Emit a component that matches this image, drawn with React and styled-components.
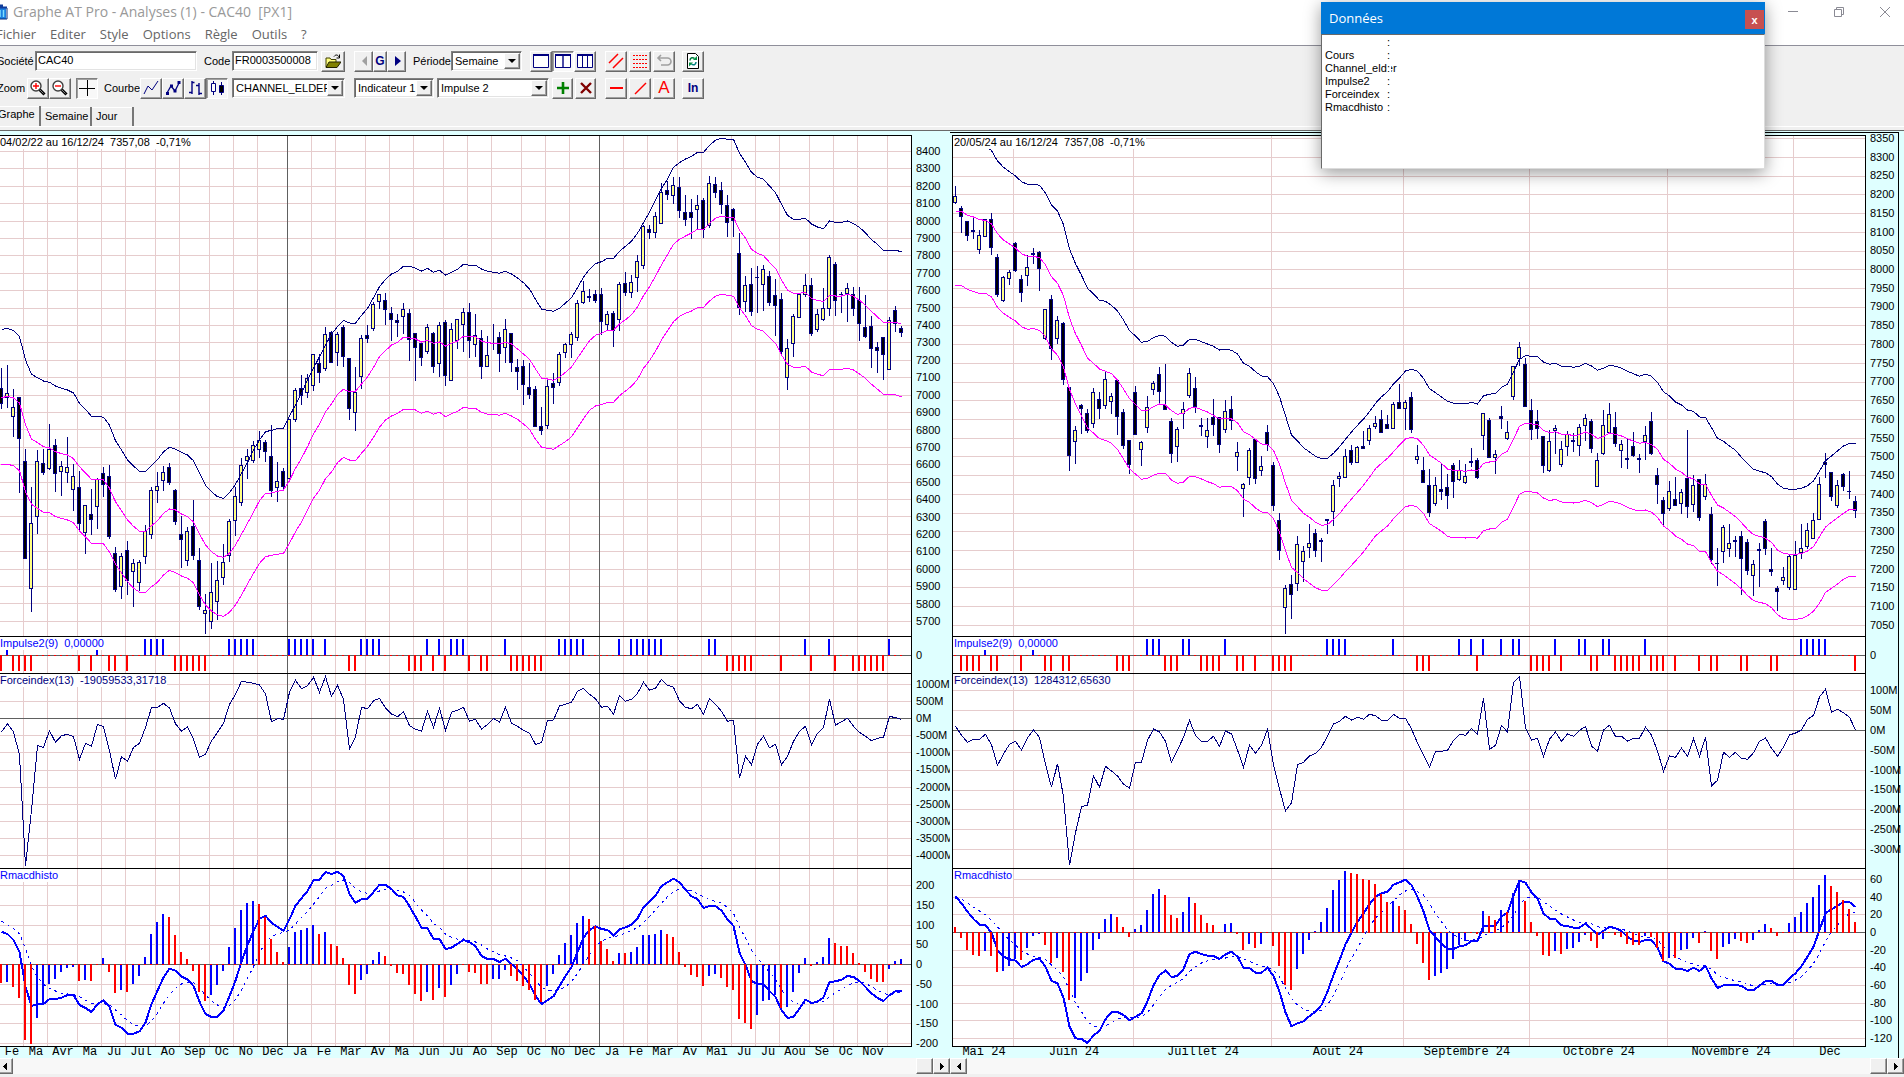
import React from "react";
import styled, { createGlobalStyle, css } from "styled-components";

const nums = (s) => s.trim().split(/\s+/).map(Number);

// Levels are recorded in thirds of a pixel, one per bar.
const WEEKLY = {
  title: "04/02/22 au 16/12/24  7357,08  -0,71%",
  force: "Forceindex(13)  -19059533,31718",
  months: [
    ["Fe", 4], ["Ma", 4], ["Avr", 5], ["Ma", 4], ["Ju", 4], ["Jul", 5], ["Ao", 4],
    ["Sep", 5], ["Oc", 4], ["No", 4], ["Dec", 5], ["Ja", 4], ["Fe", 4], ["Mar", 5],
    ["Av", 4], ["Ma", 4], ["Jun", 5], ["Ju", 4], ["Ao", 4], ["Sep", 5], ["Oc", 4],
    ["No", 4], ["Dec", 5], ["Ja", 4], ["Fe", 4], ["Mar", 5], ["Av", 4], ["Mai", 5],
    ["Ju", 4], ["Ju", 4], ["Aou", 5], ["Se", 4], ["Oc", 4], ["Nov", 5], ["", 4],
  ],
  years: [48, 100],
  scales: {
    price: { first: 15, step: 17.4, from: 8400, by: -100, count: 28 },
    force: { first: 10, step: 17.1, from: 1000, by: -500, count: 11, unit: "M" },
    macd: { first: 16, step: 19.75, from: 200, by: -50, count: 9 },
  },
  upper: nums(`598 596 601 620 690 733 743 753 757 768 775 780 789 820 838 859 859 862 886 932
    960 990 1008 1024 1024 1007 989 965 952 958 967 975 992 1030 1066 1085 1100 1105 1088 1063
    1030 998 959 930 905 901 896 895 858 825 790 750 715 680 645 612 590 571 579 580
    556 535 503 470 448 432 424 409 409 415 423 415 427 421 435 427 418 403 406 406
    417 424 427 430 424 432 444 458 477 508 537 541 544 535 519 503 473 442 418 401
    395 385 385 364 349 334 310 278 247 211 175 148 112 98 87 79 67 67 46 31
    25 28 28 70 97 127 142 148 168 188 223 256 268 268 265 282 291 296 273 277
    277 273 281 292 309 329 343 361 361 361 365`),
  middle: nums(`803 799 804 819 884 927 938 950 954 965 971 975 986 1010 1029 1048 1048 1050 1075 1115
    1142 1170 1189 1204 1204 1187 1172 1150 1137 1140 1152 1160 1176 1212 1245 1265 1278 1282 1270 1245
    1213 1180 1147 1112 1090 1089 1084 1080 1052 1015 985 950 912 882 845 822 793 778 785 784
    762 741 712 680 662 645 637 622 624 627 636 631 640 636 648 640 633 619 621 620
    633 638 640 642 637 642 657 672 688 717 744 747 751 742 727 711 684 658 632 616
    610 601 601 582 569 554 530 497 470 439 404 374 343 328 318 309 298 298 280 265
    259 262 262 300 325 358 370 377 397 415 450 480 490 490 487 505 512 514 496 498
    498 493 499 511 526 544 561 577 577 577 583`),
  lower: nums(`1005 1003 1007 1022 1085 1123 1135 1147 1148 1160 1165 1170 1178 1203 1221 1240 1240 1241 1267 1302
    1329 1355 1374 1387 1387 1370 1357 1335 1321 1328 1338 1345 1358 1395 1425 1443 1455 1459 1447 1425
    1395 1362 1330 1300 1280 1276 1273 1270 1240 1205 1176 1140 1105 1080 1046 1026 998 982 990 992
    970 949 922 892 870 858 850 838 838 840 850 844 853 847 860 851 844 832 835 835
    847 853 853 856 850 858 868 882 898 928 951 955 958 946 935 920 893 866 841 828
    823 818 817 797 783 769 748 715 692 664 630 602 575 559 550 543 533 532 513 499
    493 496 499 533 557 587 598 604 623 640 675 703 712 712 709 726 733 737 718 718
    718 715 720 732 745 763 778 793 793 794 800`),
  // high, body top, body bottom, low, 1 when the close is up
  candles: `715 775 821 838 0|705 790 803 833 1|778 831 862 922 1|800 802 926 1090 0|957 993 1286 1286 0
    |1072 1180 1376 1445 1|960 994 1160 1212 1|957 999 1028 1036 0|882 958 1016 1020 1|927 945 1031 1085 0
    |994 1009 1025 1097 1|921 1011 1030 1058 1|1003 1039 1081 1142 1|1023 1072 1181 1203 0|1125 1126 1208 1272 1
    |1078 1152 1169 1215 0|1045 1048 1132 1196 1|1011 1030 1064 1100 0|1005 1038 1220 1226 0|1251 1269 1379 1386 0
    |1270 1279 1370 1407 1|1233 1260 1352 1394 0|1288 1300 1325 1430 1|1290 1297 1358 1383 1|1185 1204 1280 1301 1
    |1070 1081 1214 1226 1|1026 1069 1084 1118 1|1009 1027 1052 1082 1|1000 1011 1058 1064 0|1077 1080 1175 1185 0
    |1158 1213 1229 1313 0|1190 1204 1292 1307 1|1110 1188 1277 1289 0|1255 1290 1430 1440 0|1393 1441 1451 1511 1
    |1298 1387 1475 1497 1|1293 1351 1417 1471 1|1242 1297 1343 1364 1|1168 1174 1277 1296 1|1070 1099 1172 1218 1
    |984 1006 1118 1128 1|957 979 992 1047 1|933 946 992 998 1|904 929 961 984 1|930 937 965 996 0
    |885 979 1082 1100 0|995 1053 1073 1116 1|1014 1023 1070 1077 0|866 868 1046 1048 1|774 781 869 876 1
    |735 775 798 825 0|732 744 789 804 1|673 673 767 782 1|673 699 728 758 0|591 613 718 722 1
    |603 607 698 699 0|606 612 668 708 1|585 592 681 710 0|684 685 836 870 0|711 787 848 903 1
    |616 625 742 776 1|585 615 627 638 0|517 523 596 603 1|492 493 515 537 1|489 511 539 585 0
    |532 549 570 632 0|553 570 579 620 0|519 538 562 612 1|538 549 629 692 0|610 610 654 753 0
    |638 640 683 708 0|583 592 665 671 1|607 610 711 729 0|577 586 703 741 1|571 577 738 768 0
    |580 598 752 752 1|567 568 632 657 1|534 547 584 665 1|519 547 632 684 0|552 616 644 681 1
    |600 625 711 747 0|617 676 710 711 1|582 638 640 660 0|606 621 671 726 0|567 598 653 699 1
    |609 610 698 726 0|687 711 725 780 0|690 708 764 825 0|699 771 795 807 0|768 777 890 890 0
    |831 888 902 914 0|744 769 887 897 1|729 759 773 822 0|666 673 758 768 1|640 643 668 684 1
    |606 613 644 684 1|510 520 623 633 1|453 484 518 522 1|477 498 503 516 0|480 492 513 519 0
    |474 492 575 615 0|543 553 584 602 1|543 549 602 651 0|456 463 569 603 1|426 459 488 497 0
    |435 457 488 504 1|375 394 443 486 1|285 289 407 417 1|285 297 309 327 0|246 259 308 324 1
    |159 187 281 282 1|153 180 195 210 0|141 166 197 222 1|141 171 242 264 0|195 246 270 288 0
    |207 246 263 327 0|195 226 239 300 1|204 210 299 324 0|138 160 287 294 1|141 162 188 204 0
    |156 180 224 252 0|195 225 278 321 0|234 237 272 321 0|309 369 534 555 0|438 466 515 546 1
    |414 462 545 558 0|408 441 443 549 0|405 418 464 543 1|423 438 518 528 0|447 495 528 618 0
    |489 507 665 678 0|627 655 743 780 1|552 559 641 681 1|490 493 563 564 1|432 466 494 501 1
    |444 465 611 618 0|537 553 599 606 1|474 535 569 573 1|375 382 536 558 1|396 402 512 558 0
    |486 493 496 549 0|459 475 491 576 1|471 493 537 558 0|471 509 581 633 0|495 591 621 624 0
    |558 588 656 714 0|636 651 662 729 0|621 622 674 750 0|561 571 719 719 1|528 540 581 606 0
    |588 594 609 621 0`.split("|").map(nums),
  up: nums(`1 16 24 25 26 27 38 39 40 41 42 48 49 50 51 52 54 60 61 62 63 71 73 75 76 77 84
    93 94 95 96 97 103 105 106 107 108 109 110 118 119 134 138 148`),
  down: nums(`0 2 3 4 5 13 15 18 19 21 29 30 31 32 33 34 58 59 68 69 70 72 74 78 80 81
    85 86 87 88 89 90 121 122 123 124 125 130 135 139 142 143 144 145 146 147`),
  forceLine: nums(`305 281 306 375 707 540 347 352 302 337 317 313 320 388 340 349 283 290 362 448
    380 394 352 340 292 233 232 220 234 281 304 290 327 382 372 333 307 280 223 193
    154 157 160 165 192 275 266 268 187 151 176 167 142 187 140 199 166 208 358 320
    232 236 212 205 234 252 260 245 287 298 304 244 292 235 301 247 241 232 274 268
    297 284 265 276 232 280 289 301 310 343 338 271 270 228 223 217 184 175 193 206
    232 229 253 196 214 208 190 157 181 175 148 166 172 213 232 236 223 253 205 223
    244 274 271 445 379 404 343 319 353 343 404 379 334 304 289 344 310 292 208 286
    275 265 289 307 319 332 325 322 259 263 268`),
  histo: nums(`1058 1057 1071 1103 1229 1241 1163 1120 1061 1046 1025 1013 1010 1053 1049 1052 1006 984 1025 1088
    1080 1085 1061 1037 981 912 876 852 861 915 966 987 1022 1086 1112 1094 1064 1022 951 894
    840 819 813 822 861 927 966 996 951 906 900 894 885 912 906 942 948 984 1064 1091
    1049 1031 990 966 978 1007 1028 1031 1064 1091 1112 1085 1109 1073 1100 1064 1031 1006 1025 1028
    1062 1062 1047 1046 1020 1038 1053 1068 1080 1109 1115 1067 1032 975 939 915 879 858 867 888
    933 957 993 969 969 966 951 915 914 912 900 912 921 966 1010 1034 1041 1067 1037 1031
    1044 1070 1079 1166 1178 1196 1154 1112 1110 1094 1134 1130 1085 1028 984 1007 996 981 924 939
    948 948 969 1000 1025 1046 1055 1056 1016 993 987`),
  macd: nums(`905 912 930 965 1070 1128 1122 1122 1107 1107 1103 1095 1095 1125 1134 1146 1122 1111 1130 1184
    1193 1211 1211 1204 1178 1122 1082 1042 1016 1022 1040 1048 1068 1115 1152 1161 1160 1142 1098 1052
    995 945 903 866 857 879 890 902 868 827 805 783 751 749 726 732 725 738 792 818
    808 806 786 764 765 777 796 801 829 860 893 895 926 927 957 953 941 930 937 949
    978 987 987 996 986 1002 1018 1038 1063 1097 1122 1111 1099 1068 1038 1011 967 923 900 889
    897 900 916 898 892 884 865 832 815 797 768 757 746 757 779 799 807 834 828 828
    842 868 888 968 1004 1053 1062 1062 1083 1101 1140 1164 1160 1136 1109 1119 1115 1102 1056 1054
    1049 1038 1041 1053 1071 1090 1104 1113 1095 1084 1084`),
  signal: nums(`874 884 895 912 955 1008 1042 1063 1075 1083 1090 1092 1093 1100 1110 1120 1122 1121 1124 1140
    1155 1172 1183 1190 1188 1172 1150 1120 1094 1075 1062 1058 1058 1075 1095 1112 1125 1133 1126 1108
    1080 1045 1010 970 935 920 912 907 900 882 862 845 822 800 775 766 755 750 758 775
    785 790 789 783 779 778 781 786 796 818 840 858 880 893 912 922 928 927 932 936
    945 957 966 974 978 984 993 1010 1030 1052 1072 1081 1083 1079 1070 1055 1030 1002 975 950
    933 925 922 915 910 901 893 878 860 840 820 800 785 776 777 783 791 801 809 814
    820 832 850 890 925 960 985 1005 1027 1048 1080 1103 1116 1124 1118 1117 1117 1115 1100 1088
    1077 1066 1060 1056 1060 1070 1081 1090 1095 1090 1087`),
  zero: { force: 88, macd: 334 },
};

const DAILY = {
  title: "20/05/24 au 16/12/24  7357,08  -0,71%",
  force: "Forceindex(13)  1284312,65630",
  months: [
    ["Mai 24", 10], ["Juin 24", 20], ["Juillet 24", 23], ["Aout 24", 22],
    ["Septembre 24", 21], ["Octobre 24", 23], ["Novembre 24", 21], ["Dec", 12],
  ],
  years: [],
  scales: {
    price: { first: 2.2, step: 18.72, from: 8350, by: -50, count: 27 },
    force: { first: 16, step: 19.9, from: 100, by: -50, count: 9, unit: "M" },
    macd: { first: 10, step: 17.67, from: 60, by: -20, count: 10 },
  },
  upper: nums(`20 22 28 32 38 45 62 93 112 125 138 155 163 163 166 190 225 243 284 357
    401 436 475 492 511 514 526 543 570 602 618 637 634 623 616 619 637 649 645 628
    628 635 642 649 660 658 661 672 700 709 725 738 740 761 800 857 915 933 953 966
    979 986 985 970 950 928 906 886 867 845 820 800 785 762 744 723 718 724 745 776
    788 801 814 820 820 822 817 822 797 793 790 772 762 725 688 677 679 680 696 703
    700 709 709 712 709 700 708 721 715 706 709 715 724 731 739 733 739 757 785 798
    816 825 840 844 861 862 893 925 934 948 961 982 1000 1018 1024 1028 1040 1062 1075 1078
    1078 1075 1067 1053 1023 992 978 963 948 940 940`),
  middle: nums(`244 244 256 261 269 271 282 311 330 342 354 371 379 379 383 404 440 460 497 564
    611 646 685 700 717 724 731 750 777 806 823 841 841 830 822 825 842 853 850 835
    832 839 846 856 867 866 867 878 905 914 928 942 944 961 1003 1060 1111 1130 1150 1162
    1177 1186 1184 1168 1151 1128 1107 1087 1066 1042 1016 1000 985 965 945 927 922 927 946 975
    987 1000 1017 1021 1022 1024 1020 1023 1000 996 993 973 964 927 889 880 882 884 901 908
    905 913 913 917 914 906 913 925 920 909 913 918 926 934 940 937 944 958 988 1000
    1017 1027 1042 1046 1062 1063 1096 1125 1134 1147 1160 1178 1198 1214 1219 1225 1237 1260 1270 1273
    1273 1271 1263 1250 1220 1191 1177 1163 1150 1138 1138`),
  lower: nums(`466 467 478 485 490 490 501 532 550 562 573 590 598 596 601 620 656 676 712 778
    822 858 894 909 926 931 940 958 987 1017 1032 1048 1045 1036 1030 1030 1050 1060 1056 1039
    1040 1047 1055 1061 1072 1069 1070 1082 1107 1117 1134 1146 1148 1166 1207 1262 1312 1328 1346 1360
    1373 1381 1381 1364 1346 1324 1306 1286 1266 1242 1218 1203 1188 1166 1147 1130 1126 1132 1150 1181
    1192 1204 1219 1224 1222 1224 1222 1225 1202 1197 1195 1177 1167 1131 1093 1084 1086 1089 1104 1112
    1108 1116 1117 1119 1117 1111 1118 1130 1123 1114 1117 1123 1132 1139 1143 1140 1147 1162 1188 1201
    1218 1228 1242 1247 1264 1265 1297 1324 1334 1348 1361 1377 1396 1412 1417 1421 1433 1454 1466 1468
    1468 1466 1457 1444 1420 1387 1375 1362 1348 1339 1339`),
  candles: `168 199 218 222 1|229 235 260 309 0|273 274 318 332 0|262 301 305 326 0|301 314 359 371 1
    |267 268 320 322 1|249 268 353 374 0|372 381 494 501 0|438 442 514 515 1|420 427 448 464 1
    |337 339 422 425 0|435 447 488 515 0|375 411 439 468 1|354 370 374 402 0|363 366 416 483 0
    |537 538 628 630 1|495 507 656 690 0|558 571 628 642 1|576 579 749 764 0|770 771 977 1022 0
    |888 901 937 1001 1|823 825 837 911 0|838 849 902 908 0|774 787 883 893 1|786 807 837 866 0
    |726 748 829 836 1|789 799 815 851 1|747 750 860 915 0|837 846 947 956 0|930 930 1004 1031 0
    |768 786 914 914 0|933 937 961 1007 1|798 832 893 908 1|753 760 781 794 1|711 732 785 822 0
    |702 826 839 839 0|864 874 971 998 0|891 898 952 995 1|816 838 853 896 1|714 730 797 803 1
    |741 774 832 848 0|864 886 892 917 0|864 901 920 953 1|807 861 884 917 0|861 861 944 968 0
    |810 844 899 908 1|798 837 872 900 0|936 967 980 1022 1|1059 1063 1076 1160 1|954 961 1045 1064 1
    |927 928 1046 1062 0|978 1009 1024 1037 1|885 906 946 962 0|996 1005 1127 1142 0|1149 1170 1262 1289 0
    |1366 1375 1433 1511 1|1336 1362 1396 1467 0|1218 1243 1361 1383 1|1248 1264 1295 1355 1|1182 1240 1253 1284 1
    |1198 1210 1262 1280 0|1224 1231 1235 1296 0|1167 1168 1172 1212 0|1050 1066 1145 1187 1|1026 1039 1046 1070 1
    |957 979 1043 1043 1|945 961 998 1004 0|947 952 998 998 1|903 949 956 957 0|885 895 932 944 1
    |858 880 892 896 1|840 867 908 908 0|855 882 896 897 0|816 823 896 896 1|762 816 836 837 0
    |811 817 836 899 1|786 801 899 908 0|945 979 991 1001 1|981 1020 1058 1058 0|1017 1065 1148 1160 0
    |1041 1066 1121 1128 1|1002 1077 1085 1109 0|1032 1071 1097 1137 0|999 1005 1055 1104 0|990 1021 1049 1053 1
    |1002 1039 1058 1062 1|954 993 998 1010 0|984 990 1043 1047 0|849 850 917 960 1|864 870 983 984 0
    |960 972 983 1032 1|828 858 866 896 0|873 907 926 930 1|708 709 800 809 1|636 652 686 708 1
    |684 702 830 831 0|807 840 899 930 0|840 873 896 926 0|918 919 1007 1028 0|900 934 1022 1026 1
    |885 895 902 971 1|933 958 1004 1010 1|903 913 952 978 1|909 930 935 965 0|882 891 947 977 1
    |852 865 887 933 1|867 873 956 968 0|969 991 1070 1071 1|840 886 971 975 1|819 853 908 908 1
    |846 891 941 950 0|930 943 962 1014 1|927 984 989 1017 0|906 948 977 980 0|972 984 991 1028 1
    |888 916 935 990 1|846 873 971 975 0|1014 1035 1064 1122 0|1101 1110 1151 1187 0|1053 1084 1136 1142 1
    |1041 1107 1127 1127 0|1077 1087 1121 1151 1|900 1044 1131 1164 0|1035 1066 1124 1145 1|1047 1047 1164 1172 0
    |1032 1063 1100 1109 1|1131 1152 1289 1301 0|1254 1299 1301 1368 0|1185 1192 1265 1298 1|1182 1240 1256 1280 1
    |1218 1230 1235 1280 0|1203 1218 1286 1395 0|1227 1236 1323 1334 0|1290 1303 1337 1398 1|1239 1257 1262 1371 0
    |1167 1173 1256 1275 0|1254 1317 1326 1337 0|1368 1374 1386 1443 0|1311 1342 1352 1364 1|1275 1279 1373 1380 1
    |1233 1276 1379 1380 1|1182 1255 1268 1286 1|1179 1201 1250 1256 1|1149 1171 1226 1226 1|1041 1063 1169 1169 1
    |969 997 1004 1044 0|1026 1027 1101 1113 0|1050 1066 1127 1133 1|1029 1032 1070 1083 0|1023 1083 1085 1107 0
    |1098 1113 1142 1164 0`.split("|").map(nums),
  up: nums(`5 13 32 33 34 38 39 45 62 63 64 65 73 84 86 88 91 93 94 100 104 105 108 109 115
    141 142 143 144 145`),
  down: nums(`1 2 3 4 6 7 11 15 16 18 19 27 28 29 35 36 37 41 42 43 44 47 48 50 53 54 55 56
    77 78 79 87 96 97 98 99 101 106 107 110 111 112 113 114 116 117 118 120 124 126 127
    131 132 136 137 150`),
  forceLine: nums(`289 316 337 328 328 313 344 406 372 343 334 360 324 300 322 403 472 401 500 706
    608 530 525 437 472 409 423 438 462 475 397 397 331 297 306 334 397 360 322 271
    316 334 334 319 349 303 312 360 412 345 370 346 298 405 477 543 519 404 397 378
    370 352 318 282 274 259 270 262 268 253 257 271 271 253 265 265 297 339 375 412
    364 364 361 331 313 316 295 313 205 358 346 286 306 157 139 295 331 325 379 328
    306 334 312 319 301 290 348 364 300 286 319 319 333 325 325 291 316 363 424 378
    382 354 379 327 379 322 468 451 367 382 367 385 388 368 334 324 355 379 351 315
    309 300 268 256 201 178 246 238 248 262 300`),
  histo: nums(`891 923 960 975 977 963 977 1025 1024 1007 987 990 953 917 911 944 998 983 1025 1109
    1103 1052 1028 960 926 867 852 861 891 922 897 885 840 792 777 795 855 864 846 801
    819 855 879 885 909 882 879 911 960 941 953 941 907 947 1007 1064 1079 1016 971 929
    903 876 834 780 750 723 729 732 747 750 762 792 816 813 828 840 882 941 998 1049
    1037 1028 1016 986 945 932 909 911 843 858 870 840 846 789 753 813 876 917 974 977
    962 971 956 953 935 914 932 953 926 909 914 922 941 944 944 917 920 953 992 983
    984 959 956 923 938 903 962 986 950 941 926 932 938 929 900 882 894 917 910 879
    861 846 819 801 765 735 768 786 810 837 876`),
  macd: nums(`799 820 845 867 884 886 908 960 980 988 992 1011 1003 989 986 1010 1053 1060 1103 1190
    1225 1227 1239 1216 1203 1168 1146 1146 1155 1171 1160 1150 1114 1066 1035 1022 1041 1038 1018 972
    965 972 977 978 987 973 965 980 1013 1014 1028 1028 1013 1038 1085 1147 1189 1180 1174 1158
    1145 1125 1085 1035 990 943 908 875 850 823 800 790 785 764 757 749 765 801 844 900
    922 940 957 957 949 946 933 933 888 887 887 859 849 797 752 758 787 805 850 866
    867 886 888 893 893 880 897 914 903 890 895 903 921 931 936 930 930 953 994 1001
    1016 1017 1023 1013 1023 1008 1045 1074 1066 1064 1064 1068 1079 1080 1067 1053 1053 1065 1065 1045
    1030 1008 980 950 900 850 838 827 816 816 831`),
  signal: nums(`805 808 818 832 843 855 870 890 913 930 945 962 972 979 983 988 1005 1020 1040 1080
    1118 1145 1175 1188 1192 1188 1178 1168 1162 1163 1163 1160 1147 1125 1100 1078 1066 1057 1045 1025
    1010 999 992 988 987 984 979 980 988 994 1002 1008 1012 1022 1040 1075 1105 1125 1138 1143
    1145 1140 1125 1095 1060 1020 985 955 920 888 865 845 830 812 795 783 778 785 795 820
    850 875 900 915 922 930 930 929 917 910 903 892 880 855 825 805 802 801 815 828
    840 852 861 870 877 878 881 890 893 892 893 897 903 910 919 921 922 930 950 966
    980 989 998 1001 1007 1007 1018 1035 1042 1048 1052 1055 1062 1068 1068 1063 1061 1062 1062 1058
    1050 1040 1022 1000 970 935 905 885 865 850 847`),
  zero: { force: 100, macd: 302 },
};

const WIDTH = 912;
const BAR = 6;
const GRID = "#e6cccd";
const DARK = "#606060";
const NAVY = "#000080";
const BLUE = "#0000ff";
const RED = "#ff0000";
const PINK = "#ff00ff";

// pane height, and how far the recorded levels sit above the pane
const PANES = {
  price: { height: 500, shift: 6 },
  impulse: { height: 36, shift: 7 },
  force: { height: 194, shift: 44 },
  macd: { height: 177, shift: 239 },
};

const starts = (months) => {
  let n = 0;
  return months.slice(0, -1).map(([, w]) => (n += w));
};

const points = (levels, shift) =>
  levels.map((v, i) => `${i * BAR + 2.5},${(v / 3 - shift).toFixed(1)}`).join(" ");

const Grid = ({ data, pane }) => {
  const scale = data.scales[pane];
  const h = PANES[pane].height;
  return (
    <g>
      {scale &&
        Array.from({ length: scale.count }, (_, k) => (
          <rect key={k} x={0} y={Math.round(scale.first + scale.step * k)} width={WIDTH} height={1} fill={GRID} />
        ))}
      {starts(data.months).map((n) => (
        <rect key={n} x={n * BAR} y={0} width={1} height={h} fill={data.years.includes(n) ? DARK : GRID} />
      ))}
    </g>
  );
};

const Drawing = ({ pane, children }) => (
  <Plot viewBox={`0 0 ${WIDTH} ${PANES[pane].height}`} preserveAspectRatio="none" shapeRendering="crispEdges" aria-hidden="true">
    {children}
  </Plot>
);

const Line = ({ levels, pane, color, width = 1, dash }) => (
  <polyline
    points={points(levels, PANES[pane].shift)}
    fill="none"
    stroke={color}
    strokeWidth={width}
    strokeDasharray={dash}
  />
);

const Candle = ({ i, bar }) => {
  const [high, top, bottom, low] = bar.map((v) => Math.round(v / 3) - PANES.price.shift);
  const up = bar[4] === 1;
  const x = i * BAR;
  const h = Math.max(1, bottom - top);
  return (
    <g>
      <rect x={x + 2} y={high} width={1} height={low - high} fill={NAVY} />
      <rect x={x} y={top} width={4} height={h} fill={NAVY} />
      {h > 2 && <rect x={x + 1} y={top + 1} width={2} height={h - 2} fill={up ? "#ffff80" : "#000"} />}
    </g>
  );
};

const PriceDrawing = ({ data }) => (
  <Drawing pane="price">
    <Grid data={data} pane="price" />
    {data.candles.map((bar, i) => (
      <Candle key={i} i={i} bar={bar} />
    ))}
    <Line levels={data.upper} pane="price" color={NAVY} />
    <Line levels={data.middle} pane="price" color={PINK} />
    <Line levels={data.lower} pane="price" color={PINK} />
  </Drawing>
);

const ImpulseDrawing = ({ data }) => (
  <Drawing pane="impulse">
    <Grid data={data} pane="impulse" />
    <rect x={0} y={18} width={WIDTH} height={1} fill={DARK} />
    {data.candles.map((_, i) => (
      <rect key={i} x={i * BAR + 1} y={18} width={2} height={1} fill={RED} />
    ))}
    {data.up.map((i) => (
      <rect key={i} x={i * BAR + 1} y={2} width={2} height={16} fill={BLUE} />
    ))}
    {data.down.map((i) => (
      <rect key={i} x={i * BAR + 1} y={19} width={2} height={15} fill={RED} />
    ))}
  </Drawing>
);

const ForceDrawing = ({ data }) => (
  <Drawing pane="force">
    <Grid data={data} pane="force" />
    <rect x={0} y={data.zero.force - PANES.force.shift} width={WIDTH} height={1} fill={DARK} />
    <Line levels={data.forceLine} pane="force" color={NAVY} />
  </Drawing>
);

const MacdDrawing = ({ data }) => {
  const zero = data.zero.macd - PANES.macd.shift;
  return (
    <Drawing pane="macd">
      <Grid data={data} pane="macd" />
      <rect x={0} y={zero} width={WIDTH} height={1} fill={DARK} />
      <Line levels={data.macd} pane="macd" color={BLUE} width={2} />
      <Line levels={data.signal} pane="macd" color={BLUE} dash="3 4 2 4" />
      {data.histo.map((v, i) => {
        const y = Math.round(v / 3) - PANES.macd.shift;
        const rising = i > 0 && v < data.histo[i - 1];
        return (
          <g key={i}>
            <rect x={i * BAR + 1} y={Math.min(y, zero)} width={2} height={Math.abs(zero - y)} fill={rising ? BLUE : RED} />
            <rect x={i * BAR + 1} y={zero} width={2} height={1} fill={RED} />
          </g>
        );
      })}
    </Drawing>
  );
};

const Scale = ({ scale, height }) => {
  const last = scale.first + scale.step * (scale.count - 1);
  return (
    <Axis $top={Math.round(scale.first - 5)} $bottom={Math.round(height - 7 - last)}>
      {Array.from({ length: scale.count }, (_, k) => (
        <span key={k}>
          {scale.from + scale.by * k}
          {scale.unit}
        </span>
      ))}
    </Axis>
  );
};

const ChartPanel = ({ data, active, name }) => (
  <Panel aria-label={name}>
    <Frame $active={active}>
      <Row $grow={501}>
        <Cell>
          <PriceDrawing data={data} />
          <Legend>{data.title}</Legend>
        </Cell>
        <Scale scale={data.scales.price} height={501} />
      </Row>
      <Row $grow={37}>
        <Cell>
          <ImpulseDrawing data={data} />
          <Legend $color={BLUE}>{"Impulse2(9)  0,00000"}</Legend>
        </Cell>
        <Scale scale={{ first: 18, step: 0, from: 0, by: 0, count: 1 }} height={37} />
      </Row>
      <Row $grow={195}>
        <Cell>
          <ForceDrawing data={data} />
          <Legend $color={NAVY}>{data.force}</Legend>
        </Cell>
        <Scale scale={data.scales.force} height={195} />
      </Row>
      <Row $grow={179}>
        <Cell $last>
          <MacdDrawing data={data} />
          <Legend $color={BLUE}>Rmacdhisto</Legend>
        </Cell>
        <Scale scale={data.scales.macd} height={179} />
      </Row>
      <Months>
        {data.months.map(([label, span], i) => (
          <Month key={i} $span={span}>
            {label}
          </Month>
        ))}
      </Months>
    </Frame>
    <ScrollBar>
      <ScrollButton aria-label="Reculer">
        <svg width="4" height="7" viewBox="0 0 4 7" shapeRendering="crispEdges">
          <path d="M4 0v7L0 3.5z" />
        </svg>
      </ScrollButton>
      <Track>
        <Thumb />
      </Track>
      <ScrollButton aria-label="Avancer">
        <svg width="4" height="7" viewBox="0 0 4 7" shapeRendering="crispEdges">
          <path d="M0 0v7L4 3.5z" />
        </svg>
      </ScrollButton>
    </ScrollBar>
  </Panel>
);

const Icon = ({ children, size = 16 }) => (
  <svg width={size} height={size} viewBox={`0 0 ${size} ${size}`} fill="none" aria-hidden="true">
    {children}
  </svg>
);

const Magnifier = ({ plus }) => (
  <Icon>
    <path d="M9.5 9.5l5 5" stroke="#000" strokeWidth="3" />
    <path d="M9.5 9.5l4 4" stroke="#808080" />
    <circle cx="6" cy="6" r="5" fill="#fff" stroke="#404040" strokeWidth="1.4" />
    <path d={plus ? "M3 6h6M6 3v6" : "M3 6h6"} stroke="red" strokeWidth="1.4" />
  </Icon>
);

const Sheet = ({ columns }) => (
  <Icon>
    <path d="M.5 1.5h15v13H.5z" fill="#fff" stroke={NAVY} />
    <path d="M0 2h16" stroke={NAVY} strokeWidth="2" />
    {columns === 2 && <path d="M8 2v12" stroke={NAVY} strokeWidth="1.4" />}
    {columns === 3 && <path d="M5.5 2v12M10.5 2v12" stroke={NAVY} />}
  </Icon>
);

const Dropdown = ({ label, value, width }) => (
  <Combo $w={width}>
    <select aria-label={label} defaultValue={value}>
      <option>{value}</option>
    </select>
    <Arrow>
      <svg width="8" height="4" viewBox="0 0 8 4" aria-hidden="true">
        <path d="M0 0h8L4 4z" />
      </svg>
    </Arrow>
  </Combo>
);

const MENUS = ["Fichier", "Editer", "Style", "Options", "Règle", "Outils", "?"];
const FIELDS = ["", "Cours", "Channel_elder", "Impulse2", "Forceindex", "Rmacdhisto"];

const App = () => (
  <>
    <GlobalStyle />
    <Window>
      <TitleBar>
        <Icon>
          <path d="M2 4h12v11H2z" fill="#1a7fe0" />
          <path d="M1 3.5h14M5 1.5h6" stroke="#103c9c" strokeWidth="2" />
          <path d="M4.5 6v7M8 6v7M11.5 6v7" stroke="#7fe0ff" strokeWidth="1.5" />
          <path d="M2 15h13V4" stroke="#082a78" />
        </Icon>
        <Caption>{"Graphe AT Pro - Analyses (1) - CAC40  [PX1]"}</Caption>
        <WindowButton aria-label="Réduire">
          <Icon size={12}><path d="M1 5.5h10" stroke="#8a8a94" /></Icon>
        </WindowButton>
        <WindowButton aria-label="Restaurer">
          <Icon size={12}>
            <path d="M1.5 3.5h7v7h-7zM3.5 3V1.5h7v7H9" stroke="#8a8a94" />
          </Icon>
        </WindowButton>
        <WindowButton aria-label="Fermer">
          <Icon size={12}><path d="M1 1l10 10M11 1L1 11" stroke="#8a8a94" /></Icon>
        </WindowButton>
      </TitleBar>
      <MenuBar>
        {MENUS.map((m) => (
          <MenuItem key={m}>{m}</MenuItem>
        ))}
      </MenuBar>

      <Toolbar>
        <ToolRow>
          <Label htmlFor="societe" $w={38}>Société</Label>
          <Field id="societe" defaultValue="CAC40" $w={162} />
          <Group $gap={7}>
            <Label htmlFor="code" $w={28}>Code</Label>
            <Field id="code" defaultValue="FR0003500008" $w={86} />
          </Group>
          <Group $gap={3}>
            <Tool $w={24} aria-label="Ouvrir">
              <Icon>
                <path d="M1 14V5h4l1 1.5h5V9" fill="#ffff80" stroke="#404000" />
                <path d="M1 14.5L4 9h12l-4 5.5z" fill="#808000" stroke="#202000" />
                <path d="M9 3.5c2-2.5 4-1.5 5 .5M14.5 1.5V5H11.5" stroke="#000" />
              </Icon>
            </Tool>
          </Group>
          <Group $gap={9}>
            <Tool $w={19} aria-label="Précédent">
              <Icon size={12}><path d="M9 1v10L4 6z" fill="#a0a0a0" /></Icon>
            </Tool>
            <Tool $w={14} $ink={NAVY}>G</Tool>
            <Tool $w={19} aria-label="Suivant">
              <Icon size={12}><path d="M4 1v10l6-5z" fill={NAVY} /></Icon>
            </Tool>
          </Group>
          <Group $gap={7}>
            <Label as="span" $w={38}>Période</Label>
            <Dropdown label="Période" value="Semaine" width={71} />
          </Group>
          <Group $gap={8}>
            <Tool aria-label="Un graphe"><Sheet columns={1} /></Tool>
            <Tool aria-label="Deux graphes" $pressed><Sheet columns={2} /></Tool>
            <Tool aria-label="Trois graphes"><Sheet columns={3} /></Tool>
          </Group>
          <Group $gap={9} $inner={2}>
            <Tool aria-label="Parallèles">
              <Icon><path d="M1 10L10 1M5 15L15 5" stroke="red" strokeWidth="1.5" /></Icon>
            </Tool>
            <Tool aria-label="Retracements">
              <Icon>
                <path d="M1 2.5h14M1 6.5h14M1 10.5h14M1 14.5h14" stroke="red" strokeDasharray="2 1" />
              </Icon>
            </Tool>
            <Tool aria-label="Annuler">
              <Icon><path d="M5 2L2 5l3 3M2 5h9.5a3.5 3.5 0 0 1 0 7H5" stroke="#a0a0a0" strokeWidth="1.6" /></Icon>
            </Tool>
          </Group>
          <Group $gap={7}>
            <Tool aria-label="Actualiser">
              <Icon>
                <path d="M2.5.5h8l3 3v12h-11z" fill="#fff" stroke="#000" />
                <path d="M5 7.5c0-3 3-3.5 4.500-2" stroke="#008040" strokeWidth="1.5" />
                <path d="M11 9c0 3-3 3.500-4.500 2" stroke="#008080" strokeWidth="1.5" />
                <path d="M8 7h4V3zM8 9.500H4v4z" fill="#009040" />
              </Icon>
            </Tool>
          </Group>
        </ToolRow>

        <ToolRow>
          <Label as="span" $w={30}>Zoom</Label>
          <Tool aria-label="Agrandir"><Magnifier plus /></Tool>
          <Tool aria-label="Diminuer"><Magnifier /></Tool>
          <Group $gap={5}>
            <Tool aria-label="Réticule" $pressed>
              <Icon><path d="M0 8.5h16M8.5 0v16" stroke="#000" /></Icon>
            </Tool>
          </Group>
          <Group $gap={6}>
            <Label as="span" $w={36}>Courbe</Label>
            <Tool aria-label="Ligne">
              <Icon><path d="M1 14l4-8 4 4 6-9" stroke={NAVY} /></Icon>
            </Tool>
            <Tool aria-label="Points">
              <Icon>
                <path d="M2 13l4-7 4 5 4-8" stroke={NAVY} strokeWidth="1.3" />
                <path d="M1 12h3v3H1zM5 4.5h3v3H5zM8.5 9.5h3v3h-3zM12.500 1h3v3h-3z" fill={NAVY} />
              </Icon>
            </Tool>
            <Tool aria-label="Barres">
              <Icon><path d="M5 1v13M2 12.5h3M5 2.5h2.5M12 3v12M9 5.5h3M12 13.5h3" stroke={NAVY} strokeWidth="1.4" /></Icon>
            </Tool>
            <Tool aria-label="Chandeliers" $pressed>
              <Icon>
                <path d="M4.5 1v14M12.5 2v13" stroke={NAVY} />
                <path d="M2.5 3.5h4v8h-4z" fill="#fff" stroke={NAVY} />
                <path d="M10.5 5.5h4v7h-4z" fill="#000" stroke={NAVY} />
              </Icon>
            </Tool>
          </Group>
          <Group $gap={4}>
            <Dropdown label="Indicateur de cours" value="CHANNEL_ELDER" width={113} />
          </Group>
          <Group $gap={9}>
            <Dropdown label="Emplacement" value="Indicateur 1" width={80} />
          </Group>
          <Group $gap={3}>
            <Dropdown label="Indicateur" value="Impulse 2" width={112} />
          </Group>
          <Group $gap={3} $inner={2}>
            <Tool $w={21} aria-label="Ajouter">
              <Icon size={14}><path d="M1 7h12M7 1v12" stroke="#008000" strokeWidth="2.6" /></Icon>
            </Tool>
            <Tool $w={21} aria-label="Supprimer">
              <Icon size={14}><path d="M2 2l10 10M12 2L2 12" stroke="#800000" strokeWidth="2.4" /></Icon>
            </Tool>
          </Group>
          <Group $gap={9} $inner={2}>
            <Tool aria-label="Horizontale">
              <Icon><path d="M2 8h13" stroke="red" strokeWidth="2" /></Icon>
            </Tool>
            <Tool aria-label="Droite">
              <Icon><path d="M3 14L14 3" stroke="red" strokeWidth="1.5" /></Icon>
            </Tool>
            <Tool $ink={RED} $size={17}>A</Tool>
          </Group>
          <Group $gap={7}>
            <Tool $ink={NAVY}>In</Tool>
          </Group>
        </ToolRow>

        <Tabs role="tablist">
          <Tab role="tab" aria-selected="true" $w={45} $active>Graphe</Tab>
          <Tab role="tab" aria-selected="false" $w={51}>Semaine</Tab>
          <Tab role="tab" aria-selected="false" $w={42}>Jour</Tab>
        </Tabs>
      </Toolbar>

      <Charts>
        <ChartPanel data={WEEKLY} name="Semaine" />
        <ChartPanel data={DAILY} name="Jour" active />
      </Charts>
    </Window>

    <DataWindow role="dialog" aria-labelledby="donnees">
      <DataTitle>
        <span id="donnees">Données</span>
        <CloseButton aria-label="Fermer Données">x</CloseButton>
      </DataTitle>
      <DataList>
        {FIELDS.map((f, i) => (
          <React.Fragment key={i}>
            <dt>{f}</dt>
            <dd>:</dd>
          </React.Fragment>
        ))}
      </DataList>
    </DataWindow>
  </>
);

export default App;

const GlobalStyle = createGlobalStyle`
  * {
    box-sizing: border-box;
  }

  body {
    margin: 0;
    overflow: hidden;
    background: #f0f0f0;
    color: #000;
    font: 11px/13px "Liberation Sans", Arial, sans-serif;
  }

  button, input, select {
    font: inherit;
    color: inherit;
  }
`;

const raised = css`
  border: 1px solid;
  border-color: #fff #696969 #696969 #fff;
  box-shadow: inset -1px -1px #a0a0a0;
  background: #f0f0f0;
`;

const sunken = css`
  border: 1px solid;
  border-color: #808080 #fff #fff #808080;
  box-shadow: inset 1px 1px #696969, inset -1px -1px #e3e3e3;
  background: #fff;
`;

// A maximised window hangs over the left edge by its own border.
const Window = styled.div`
  display: flex;
  flex-direction: column;
  height: 100vh;
  margin-left: -4px;
  padding-bottom: 3px;
`;

const TitleBar = styled.header`
  display: flex;
  align-items: center;
  height: 23px;
  background: #fff;

  & > svg {
    margin-left: -4px;
  }
`;

const Caption = styled.h1`
  flex: 1;
  margin: 0 0 0 5px;
  color: #999;
  font: 14px/20px "Open Sans", "Noto Sans", sans-serif;
  white-space: pre;
`;

const WindowButton = styled.button`
  display: grid;
  place-items: center;
  width: 46px;
  height: 20px;
  padding: 0;
  border: 0;
  background: none;

  &:last-child {
    margin-right: -4px;
  }
`;

const MenuBar = styled.nav`
  display: flex;
  gap: 14px;
  height: 22px;
  background: #fff;
`;

const MenuItem = styled.button`
  padding: 0;
  border: 0;
  background: none;
  color: #666;
  font: 13px/20px "Open Sans", "Noto Sans", sans-serif;
`;

const Toolbar = styled.section`
  display: flex;
  flex-direction: column;
  gap: 5px;
  padding: 4px 0 0 1px;
  border-top: 1px solid #8f8f9a;
  border-bottom: 1px solid #696969;
  background: #f0f0f0;
`;

const ToolRow = styled.div`
  display: flex;
  align-items: center;
  height: 22px;
`;

const Group = styled.div`
  display: flex;
  align-items: center;
  gap: ${({ $inner = 0 }) => $inner}px;
  margin-left: ${({ $gap }) => $gap}px;
`;

const Label = styled.label`
  flex: none;
  width: ${({ $w }) => $w}px;
`;

const Field = styled.input`
  ${sunken}
  width: ${({ $w }) => $w}px;
  height: 20px;
  padding: 0 2px 2px;
  outline: 0;
`;

const Tool = styled.button`
  ${raised}
  display: grid;
  place-items: center;
  width: ${({ $w = 22 }) => $w}px;
  height: 21px;
  padding: 0;
  color: ${({ $ink = "#000" }) => $ink};
  font-size: ${({ $size = 12 }) => $size}px;
  font-weight: ${({ $size = 12 }) => ($size > 12 ? 400 : 700)};
  line-height: 16px;
  ${({ $pressed }) =>
    $pressed &&
    css`
      border-color: #808080 #fff #fff #808080;
      box-shadow: inset 1px 1px #a0a0a0;
      background: #f8f8f8;
    `}
`;

const Combo = styled.div`
  ${sunken}
  display: flex;
  width: ${({ $w }) => $w}px;
  height: 20px;
  padding: 1px;

  select {
    flex: 1;
    min-width: 0;
    padding: 0 0 0 2px;
    border: 0;
    outline: 0;
    background: none;
    appearance: none;
    text-overflow: clip;
  }
`;

const Arrow = styled.span`
  ${raised}
  display: grid;
  flex: none;
  place-items: center;
  width: 16px;
  pointer-events: none;
`;

const Tabs = styled.div`
  display: flex;
  align-items: flex-start;
  height: 25px;
  margin: 1px 0 0 -1px;
  background: linear-gradient(#fff, #fff) 0 21px / 100% 1px no-repeat;
`;

const Tab = styled.button`
  width: ${({ $w }) => $w}px;
  height: ${({ $active }) => ($active ? 20 : 19)}px;
  margin-top: ${({ $active }) => ($active ? 1 : 2)}px;
  padding: 0 0 ${({ $active }) => ($active ? 4 : 1)}px 4px;
  border: 0;
  border-right: 2px solid #777;
  box-shadow: inset 0 1px #fff;
  background: none;
  text-align: left;

  &:first-child {
    padding-left: 2px;
  }
`;

const Charts = styled.main`
  display: flex;
  flex: 1;
  min-height: 0;
  background: #dfffff;
`;

const Panel = styled.section`
  display: flex;
  flex: 1;
  flex-direction: column;
  min-width: 0;
  background: #dfffff;
`;

const Frame = styled.div`
  display: flex;
  flex: 1;
  flex-direction: column;
  min-height: 0;
  margin: 1px 5px 0 0;
  padding: 2px 0 0 2px;
  border: solid ${({ $active }) => ($active ? "#000" : "transparent")};
  border-width: 1px 1px 0 0;
`;

const Row = styled.div`
  display: flex;
  flex: ${({ $grow }) => $grow} 1 0;
  min-height: 0;
`;

const Cell = styled.div`
  position: relative;
  flex: 1;
  min-width: 0;
  border: 1px solid #000;
  border-bottom-width: ${({ $last }) => ($last ? 1 : 0)}px;
  background: #fff;
`;

const Plot = styled.svg`
  display: block;
  width: 100%;
  height: 100%;
`;

const Legend = styled.span`
  position: absolute;
  top: 0;
  left: 0;
  padding: 0 1px;
  background: #fff;
  color: ${({ $color = "#000" }) => $color};
  white-space: pre;
`;

const Axis = styled.div`
  display: flex;
  flex: none;
  flex-direction: column;
  justify-content: space-between;
  width: 32px;
  margin: ${({ $top, $bottom }) => `${$top}px 0 ${$bottom}px`};
  padding-left: 4px;
  line-height: 12px;
  white-space: nowrap;
`;

const Months = styled.div`
  display: flex;
  flex: none;
  height: 11px;
  margin-right: 32px;
  padding-left: 2px;
  font: 12px/11px "Liberation Mono", "Courier New", monospace;
`;

const Month = styled.span`
  display: flex;
  flex: ${({ $span }) => $span} 1 0;
  justify-content: center;
  min-width: 0;
  white-space: nowrap;
`;

const ScrollBar = styled.div`
  display: flex;
  flex: none;
  height: 16px;
  background: #f8f8f8;
`;

const ScrollButton = styled.button`
  ${raised}
  display: grid;
  place-items: center;
  width: 17px;
  padding: 0;
`;

const Track = styled.div`
  display: flex;
  flex: 1;
  justify-content: flex-end;
`;

const Thumb = styled.div`
  ${raised}
  width: 17px;
`;

const DataWindow = styled.aside`
  position: absolute;
  top: 2px;
  right: 139px;
  width: 444px;
  height: 167px;
  background: #fff;
  box-shadow: 0 4px 16px rgba(0, 0, 0, 0.4);
`;

const DataTitle = styled.div`
  display: flex;
  align-items: center;
  justify-content: space-between;
  height: 32px;
  padding: 0 1px 0 8px;
  background: #0078d7;
  color: #fff;
  font: 13px/20px "Open Sans", "Noto Sans", sans-serif;
`;

const CloseButton = styled.button`
  width: 19px;
  height: 19px;
  margin-top: 3px;
  padding: 0;
  border: 0;
  background: #c75050;
  font: bold 11px/16px "Liberation Sans", Arial, sans-serif;
`;

const DataList = styled.dl`
  display: grid;
  grid-template-columns: 62px 4px;
  align-content: start;
  height: 135px;
  margin: 0;
  padding: 1px 3px;
  border: 1px solid;
  border-color: #696969 #dcdcdc #dcdcdc #696969;

  dt {
    height: 13px;
    white-space: nowrap;
  }

  dd {
    margin: 0;
    background: #fff;
  }
`;
